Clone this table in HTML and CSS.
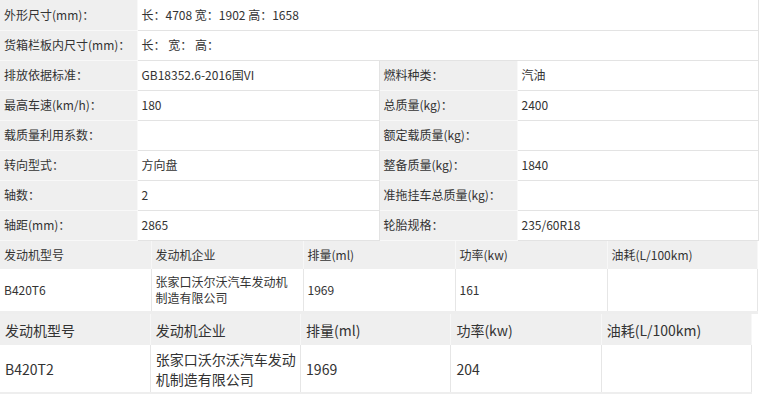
FILE: index.html
```html
<!DOCTYPE html>
<html lang="zh">
<head>
<meta charset="utf-8">
<link rel="stylesheet" href="styles.css">
</head>
<body>
<table class="spec">
  <colgroup><col class="c1"><col class="c2"><col class="c3"><col class="c4"></colgroup>
  <tr><td class="lbl">外形尺寸(mm)：</td><td colspan="3">长：4708 宽：1902 高：1658</td></tr>
  <tr><td class="lbl">货箱栏板内尺寸(mm)：</td><td colspan="3">长： 宽： 高：</td></tr>
  <tr><td class="lbl">排放依据标准：</td><td>GB18352.6-2016国VI</td><td class="lbl">燃料种类：</td><td>汽油</td></tr>
  <tr><td class="lbl">最高车速(km/h)：</td><td>180</td><td class="lbl">总质量(kg)：</td><td>2400</td></tr>
  <tr><td class="lbl">载质量利用系数：</td><td></td><td class="lbl">额定载质量(kg)：</td><td></td></tr>
  <tr><td class="lbl">转向型式：</td><td>方向盘</td><td class="lbl">整备质量(kg)：</td><td>1840</td></tr>
  <tr><td class="lbl">轴数：</td><td>2</td><td class="lbl">准拖挂车总质量(kg)：</td><td></td></tr>
  <tr><td class="lbl">轴距(mm)：</td><td>2865</td><td class="lbl">轮胎规格：</td><td>235/60R18</td></tr>
</table>
<table class="engine e1">
  <colgroup><col class="a"><col class="b"><col class="b"><col class="b"><col class="e"></colgroup>
  <tr class="head"><td>发动机型号</td><td>发动机企业</td><td>排量(ml)</td><td>功率(kw)</td><td>油耗(L/100km)</td></tr>
  <tr class="data"><td>B420T6</td><td>张家口沃尔沃汽车发动机制造有限公司</td><td>1969</td><td>161</td><td></td></tr>
</table>
<table class="engine e2">
  <colgroup><col><col><col><col><col></colgroup>
  <tr class="head"><td>发动机型号</td><td>发动机企业</td><td>排量(ml)</td><td>功率(kw)</td><td>油耗(L/100km)</td></tr>
  <tr class="data"><td>B420T2</td><td>张家口沃尔沃汽车发动机制造有限公司</td><td>1969</td><td>204</td><td></td></tr>
</table>
</body>
</html>
```
FILE: styles.css
```css
html, body {
  margin: 0;
  padding: 0;
  background: #fff;
}
body {
  font-family: "Noto Sans CJK SC", "Liberation Sans", sans-serif;
  color: #333;
  font-size: 12px;
}
table {
  border-collapse: collapse;
  table-layout: fixed;
}
td {
  padding: 0 0 0 4px;
  vertical-align: middle;
  line-height: 16px;
}
.spec {
  width: 758px;
}
.spec .c1 { width: 137px; }
.spec .c2 { width: 242px; }
.spec .c3 { width: 138px; }
.spec .c4 { width: 241px; }
.spec tr { height: 30px; }
.spec td {
  border-bottom: 1px solid #e3e3e3;
  border-right: 1px solid #e3e3e3;
  border-bottom-color: #e3e3e3;
}
.spec td.lbl {
  background: #efefef;
  border-bottom-color: #f8f8f8;
  border-right-color: #f8f8f8;
}
.engine {
  background: #fff;
}
.engine td {
  border-right: 1px solid #e6e6e6;
}
.engine .head td {
  background: #efefef;
  border-right-color: #f7f7f7;
}
.e1 {
  width: 757px;
  border-bottom: 3px solid #eeeeee;
}
.e1 .a { width: 151px; }
.e1 .b { width: 152px; }
.e1 .e { width: 150px; }
.e1 .head { height: 28px; }
.e1 .data { height: 44px; }
.e1 .data td { padding-right: 8px; }
.e2 {
  width: 752px;
  font-size: 14px;
  border-bottom: 2px solid #eeeeee;
}
.e2 td { line-height: 20px; padding-left: 5px; }
.e2 .head { height: 31px; }
.e2 .data { height: 48px; }
.e2 .data td { padding-right: 4px; }
```
